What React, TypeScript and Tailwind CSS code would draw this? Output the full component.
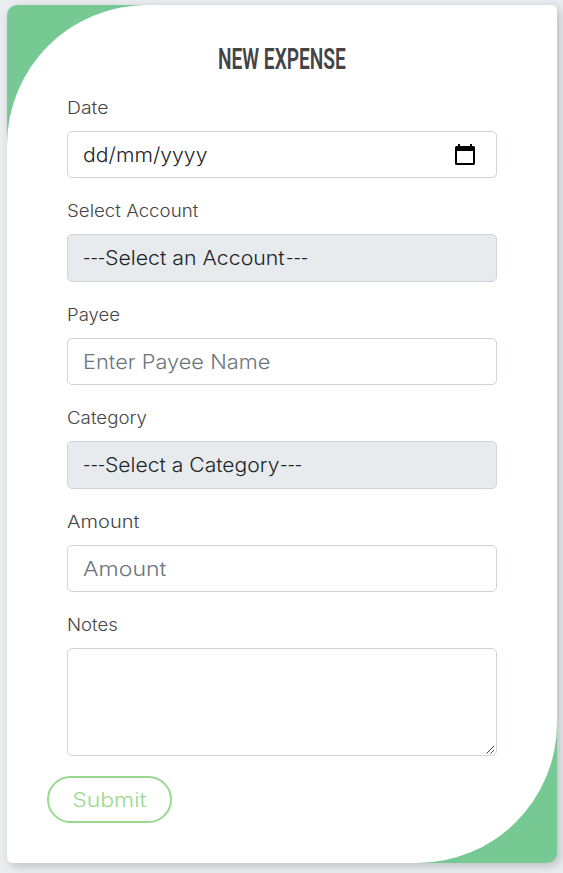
import React from "react";

const field =
  "flex w-full items-center rounded-[5px] border border-[#ced4da] pl-[15px] pr-[21px] text-[20px]";

function Label({ text, cls }: { text: string; cls: string }) {
  return (
    <label className="flex h-[24px] items-center text-[17px] text-[#444]">
      <span className={"inline-block origin-left whitespace-nowrap " + cls}>{text}</span>
    </label>
  );
}

function Dashes() {
  return <span className="inline-block w-[22px] origin-left scale-x-[0.82] whitespace-nowrap">---</span>;
}

export default function App() {
  return (
    <div className="h-[873px] w-[563px] overflow-hidden bg-[#e9edf0] pl-[7px] pt-[5px] font-['Inter',sans-serif] font-light">
      <div className="h-[858px] w-[550px] rounded-[10px] rounded-tr-[6px] rounded-bl-[6px] bg-[#77c994] shadow-[3px_3px_10px_rgba(0,0,0,0.2)]">
        <div className="flex h-full flex-col rounded-[5px] rounded-tl-[140px] rounded-br-[140px] bg-white px-[60px] pt-[37px]">
          <h1 className="flex h-[36px] items-center justify-center font-['Roboto',sans-serif] text-[29px] font-semibold text-[#444]">
            <span className="inline-block origin-center scale-x-[0.66] whitespace-nowrap">NEW EXPENSE</span>
          </h1>
          <div className="mt-[19px]">
            <Label text="Date" cls="scale-x-[1.14]" />
            <div className={field + " mt-[10px] h-[47px] justify-between text-[#212529]"}>
              <span className="inline-block origin-left scale-x-[1.06]">dd/mm/yyyy</span>
              <svg width="20" height="22" viewBox="0 0 20 22">
                <path d="M3 0h2v2h10V0h2v2h1.5a1.5 1.5 0 0 1 1.500 1.500v16a1.500 1.500 0 0 1-1.500 1.500h-17a1.500 1.500 0 0 1-1.500-1.500v-16A1.500 1.500 0 0 1 1.500 2H3zM2 7v12h16V7z" />
              </svg>
            </div>
          </div>
          <div className="mt-[22px]">
            <Label text="Select Account" cls="scale-x-[1.1]" />
            <div className={field + " mt-[10px] h-[48px] bg-[#e7ebee] text-[#212529]"}>
              <Dashes />
              <span className="inline-block w-[181px] origin-left scale-x-[1.065] whitespace-nowrap">Select an Account</span>
              <Dashes />
            </div>
          </div>
          <div className="mt-[22px]">
            <Label text="Payee" cls="scale-x-[1.09]" />
            <div className={field + " mt-[10px] h-[47px] text-[#6c757d]"}>
              <span className="inline-block origin-left scale-x-[1.09]">Enter Payee Name</span>
            </div>
          </div>
          <div className="mt-[22px]">
            <Label text="Category" cls="scale-x-[1.1]" />
            <div className={field + " mt-[10px] h-[48px] bg-[#e7ebee] text-[#212529]"}>
              <Dashes />
              <span className="inline-block w-[175px] origin-left scale-x-[1.055] whitespace-nowrap">Select a Category</span>
              <Dashes />
            </div>
          </div>
          <div className="mt-[22px]">
            <Label text="Amount" cls="scale-x-[1.18]" />
            <div className={field + " mt-[10px] h-[47px] text-[#6c757d]"}>
              <span className="inline-block origin-left scale-x-[1.155]">Amount</span>
            </div>
          </div>
          <div className="mt-[22px]">
            <Label text="Notes" cls="scale-x-[1.09]" />
            <div className="mt-[10px] flex h-[108px] w-full items-end justify-end rounded-[5px] border border-[#ced4da] p-px">
              <svg width="9" height="9" viewBox="0 0 9 9" fill="none" stroke="#444" strokeWidth="1">
                <path d="M0.5 8.5 8 1M4.5 8.5 8 5" />
              </svg>
            </div>
          </div>
          <button className="-ml-[20px] mt-[20px] flex h-[47px] w-[125px] items-center justify-center rounded-full border-2 border-[#98d98e] text-[20px] text-[#98d98e]">
            <span className="inline-block scale-x-[1.15]">Submit</span>
          </button>
        </div>
      </div>
    </div>
  );
}
